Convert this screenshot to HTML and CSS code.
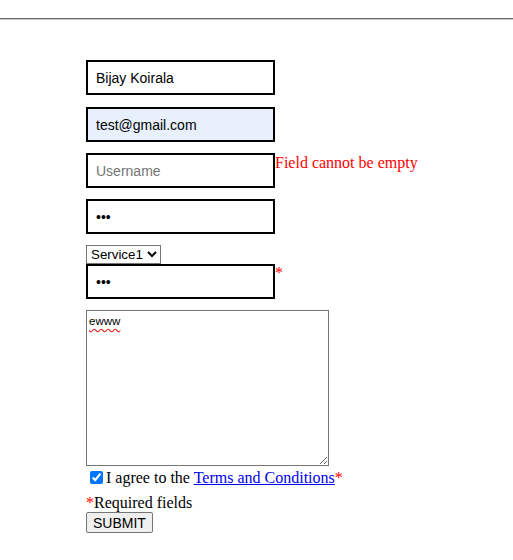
FILE: index.html
```
<!DOCTYPE html>
<html>
<head>
<meta charset="utf-8">
<link rel="stylesheet" href="styles.css">
</head>
<body>
<hr class="rule">
<form class="form">
  <div class="row first"><input class="field" type="text" value="Bijay Koirala"></div>
  <div class="row"><input class="field autofill" type="email" value="test@gmail.com"></div>
  <div class="row"><input class="field" type="text" placeholder="Username"><span class="err">Field cannot be empty</span></div>
  <div class="row"><input class="field" type="password" value="abc"></div>
  <div class="row tight"><select class="sel"><option>Service1</option><option>Service2</option></select></div>
  <div class="row"><input class="field" type="password" value="abc"><span class="star">*</span></div>
  <div class="row"><textarea class="area" spellcheck="false">ewww</textarea></div>
  <div class="agree"><input class="check" type="checkbox" checked><span>I agree to the <a href="#" class="link">Terms and Conditions</a></span><span class="red">*</span></div>
  <div class="req"><span class="red">*</span>Required fields</div>
  <button type="button" class="btn">SUBMIT</button>
</form>
</body>
</html>
```
FILE: styles.css
```
html, body {
  margin: 0;
  padding: 0;
  background: #fff;
}
body {
  font-family: "Liberation Serif", "Times New Roman", serif;
  font-size: 16px;
  color: #000;
}
.rule {
  margin: 18px 0 0 0;
  border: 0;
  border-top: 1px solid #6e6e6e;
  border-bottom: 1px solid #c4c4c4;
  height: 0;
}
.form {
  padding-left: 86px;
  padding-top: 40px;
  display: flex;
  flex-direction: column;
  align-items: flex-start;
}
.row {
  display: flex;
  align-items: flex-start;
  margin-bottom: 11px;
}
.row.first {
  margin-bottom: 12px;
}
.row.tight {
  margin-bottom: 0;
}
.field {
  box-sizing: border-box;
  width: 189px;
  height: 35px;
  margin: 0;
  border: 2px solid #000;
  padding: 0 8px;
  font-family: "Liberation Sans", Arial, sans-serif;
  font-size: 14px;
  color: #000;
  background: #fff;
  outline: none;
}
.field::placeholder {
  color: #757575;
}
.field.autofill {
  background: #e8f0fe;
}
.err {
  color: #ff0000;
  font-size: 16px;
  line-height: 18px;
  margin-top: 1px;
}
.star {
  color: #ff0000;
  font-size: 16px;
  line-height: 18px;
}
.sel {
  width: 75px;
  height: 19px;
  margin: 0;
  font-family: "Liberation Sans", Arial, sans-serif;
  font-size: 13.33px;
  padding: 0;
  border: 1px solid #767676;
  border-radius: 0;
  background: #fff;
  color: #000;
}
.area {
  box-sizing: border-box;
  width: 243px;
  height: 156px;
  margin: 0;
  border: 1px solid #767676;
  padding: 4px 2px 2px 2px;
  font-family: "Liberation Sans", Arial, sans-serif;
  font-size: 11.5px;
  resize: both;
  text-decoration: underline wavy #e02020;
  text-underline-offset: 3px;
}
.agree {
  display: flex;
  align-items: center;
  margin-top: -9px;
  line-height: 19px;
}
.check {
  width: 13px;
  height: 13px;
  margin: 0 3px 0 4px;
  accent-color: #0075ff;
}
.link {
  color: #0000ee;
  text-decoration: underline;
}
.red {
  color: #ff0000;
}
.req {
  margin-top: 7px;
  line-height: 18px;
}
.btn {
  margin: 0;
  padding: 1px 6px;
  font-family: "Liberation Sans", Arial, sans-serif;
  font-size: 14px;
  color: #000;
  background: #efefef;
  border: 1px solid #767676;
  border-radius: 2px;
  height: 21px;
}
```
